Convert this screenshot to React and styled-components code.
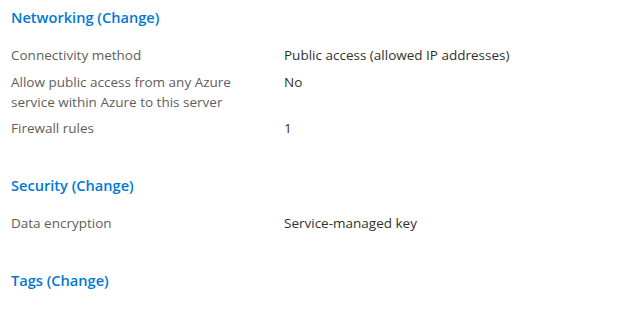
import React from 'react';
import styled, { createGlobalStyle } from 'styled-components';

const GlobalStyle = createGlobalStyle`
  html, body {
    margin: 0;
    padding: 0;
    background: #fff;
  }
  body {
    font-family: "Open Sans", "Noto Sans", "Liberation Sans", sans-serif;
  }
`;

const Page = styled.div`
  display: flex;
  flex-direction: column;
  gap: 37px;
  padding: 7px 11px 0 11px;
`;

const Section = styled.section`
  display: flex;
  flex-direction: column;
`;

const Heading = styled.h2`
  margin: 0;
  font-size: 14.6px;
  font-weight: 600;
  line-height: 20px;
  color: #0078d4;
`;

const Rows = styled.div`
  display: grid;
  grid-template-columns: 273px 1fr;
  row-gap: 6.5px;
  margin-top: 18px;
`;

const Label = styled.div`
  font-size: 13.5px;
  line-height: 20px;
  color: #605e5c;
  max-width: 250px;
`;

const Value = styled.div`
  font-size: 13.5px;
  line-height: 20px;
  color: #323130;
`;

const sections = [
  {
    title: 'Networking (Change)',
    rows: [
      ['Connectivity method', 'Public access (allowed IP addresses)'],
      ['Allow public access from any Azure service within Azure to this server', 'No'],
      ['Firewall rules', '1'],
    ],
  },
  {
    title: 'Security (Change)',
    rows: [['Data encryption', 'Service-managed key']],
  },
  { title: 'Tags (Change)', rows: [] },
];

export default function App() {
  return (
    <>
      <GlobalStyle />
      <Page>
        {sections.map((s) => (
          <Section key={s.title}>
            <Heading>{s.title}</Heading>
            {s.rows.length > 0 && (
              <Rows>
                {s.rows.map(([label, value]) => (
                  <React.Fragment key={label}>
                    <Label>{label}</Label>
                    <Value>{value}</Value>
                  </React.Fragment>
                ))}
              </Rows>
            )}
          </Section>
        ))}
      </Page>
    </>
  );
}
